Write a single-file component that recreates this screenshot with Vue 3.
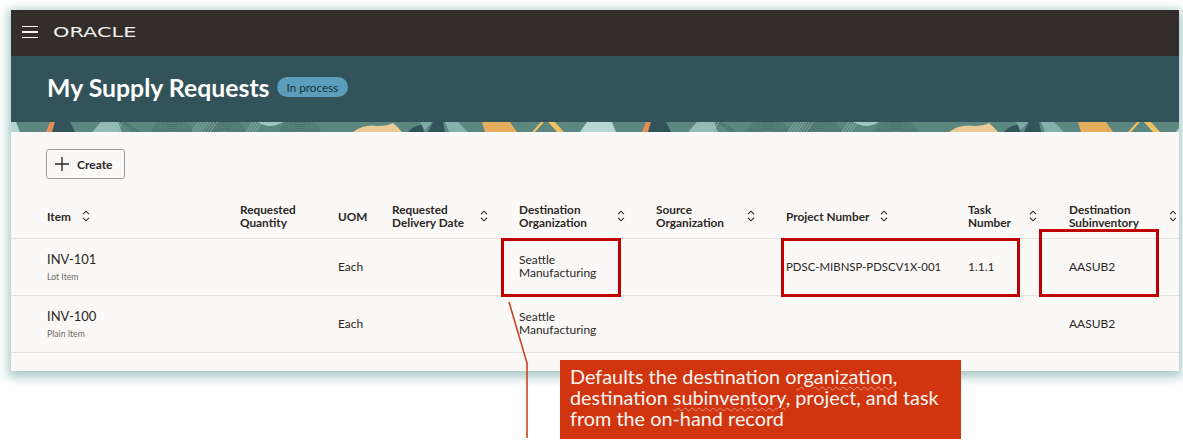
<template>
  <div class="page">
    <div class="panel">
      <header class="topbar">
        <span class="burger"><i></i><i></i><i></i></span>
        <span class="logo">ORACLE</span>
      </header>

      <div class="title-band">
        <h1>My Supply Requests</h1>
        <span class="badge">In process</span>
      </div>

      <!-- banner texture, one tile is 596px wide -->
      <svg class="texture" width="100%" height="10">
        <defs>
          <pattern id="tile" x="-11" y="0" width="596" height="10" patternUnits="userSpaceOnUse">
            <rect width="596" height="10" fill="#5c8781" />
            <polygon points="0,0 16,0 20,10 0,10" fill="#b8d5d6" />
            <polygon points="50,0 55,0 52,10 46,10" fill="#e58f52" />
            <polygon points="55,0 70,0 75,10 52,10" fill="#325359" />
            <polygon points="92,10 101,0 118,0 122,10" fill="#8cb4b0" />
            <path d="M258 0 Q270 8 283 0 Z" fill="#a0c5c2" />
            <g fill="none" stroke="#2f4f50" stroke-width="0.7" opacity="0.75">
              <circle v-for="r in rings" :key="'a' + r" cx="172" cy="18" :r="r" />
              <circle v-for="r in rings" :key="'b' + r" cx="225" cy="18" :r="r" />
              <circle v-for="r in rings" :key="'c' + r" cx="300" cy="18" :r="r" />
              <path d="M120 0Q130 4 135 10M124 0Q132 4 139 10" />
            </g>
            <g stroke="#dfeceb" stroke-width="0.7" opacity="0.45">
              <line v-for="x in hatch" :key="x" :x1="x" y1="10" :x2="x + 7" y2="0" />
            </g>
            <path d="M353 10 Q364 2 378 4 Q388 4 393 1 Q398 5 402 10 Z" fill="#ebcb95" />
            <path d="M408 10 Q414 3 422 3 L424 10 Z" fill="#325359" />
            <polygon points="420,0 432,0 425,8" fill="#7faaa6" />
            <polygon points="428,10 433,0 443,0 445,10" fill="#325359" />
            <polygon points="445,0 458,0 468,10 449,10" fill="#85b0ad" />
            <polygon points="482,0 510,0 517,10 485,10" fill="#e4ae5c" />
            <polygon points="541,0 544,0 535,10 532,10" fill="#edc263" />
            <polygon points="548,0 555,0 564,10 557,10" fill="#edc263" />
            <polygon points="587,0 596,0 596,10 580,10" fill="#b8d5d6" />
          </pattern>
        </defs>
        <rect width="100%" height="10" fill="url(#tile)" />
      </svg>

      <section class="content">
        <button class="create">
          <svg width="14" height="14" viewBox="0 0 14 14">
            <path d="M7 0V14M0 7H14" stroke="#2b2724" stroke-width="1.4" />
          </svg>
          Create
        </button>

        <div class="row head">
          <div v-for="col in columns" :key="col.label" class="th">
            <span class="th-label" :style="{ width: col.width + 'px' }">{{ col.label }}</span>
            <svg v-if="col.sort" class="sort" width="8" height="12" viewBox="0 0 8 12">
              <path d="M1 4.2L4 1.2L7 4.2M1 7.8L4 10.8L7 7.8" fill="none" stroke="#2b2724" stroke-width="1.1" />
            </svg>
          </div>
        </div>

        <div v-for="item in items" :key="item.code" class="row body">
          <div class="td">
            <div class="code">{{ item.code }}</div>
            <div class="kind">{{ item.kind }}</div>
          </div>
          <div class="td"></div>
          <div class="td">Each</div>
          <div class="td"></div>
          <div class="td org">Seattle Manufacturing</div>
          <div class="td"></div>
          <div class="td project">{{ item.project }}</div>
          <div class="td">{{ item.task }}</div>
          <div class="td">AASUB2</div>
        </div>
      </section>
    </div>

    <!-- annotations drawn over the screenshot -->
    <div class="mark mark-org"></div>
    <div class="mark mark-project"></div>
    <div class="mark mark-sub"></div>
    <svg class="leader" width="40" height="145" viewBox="0 0 40 145">
      <path d="M4 1L22 62V137" fill="none" stroke="#d0431c" stroke-width="1.6" />
    </svg>
    <div class="callout">
      Defaults the destination o<span class="typo">rganization</span>,
      destination <span class="typo">subinventory</span>, project, and task
      from the on-hand record
    </div>
  </div>
</template>

<script setup>
const columns = [
  { label: "Item", width: 35, sort: true },
  { label: "Requested Quantity", width: 70 },
  { label: "UOM", width: 40 },
  { label: "Requested Delivery Date", width: 88, sort: true },
  { label: "Destination Organization", width: 98, sort: true },
  { label: "Source Organization", width: 91, sort: true },
  { label: "Project Number", width: 94, sort: true },
  { label: "Task Number", width: 61, sort: true },
  { label: "Destination Subinventory", width: 100, sort: true },
];

const items = [
  { code: "INV-101", kind: "Lot Item", project: "PDSC-MIBNSP-PDSCV1X-001", task: "1.1.1" },
  { code: "INV-100", kind: "Plain Item", project: "", task: "" },
];

// fingerprint circles and hatch lines of the banner
const rings = [10, 12, 14, 16, 18, 20, 22];
const hatch = [95, 98, 101, 104, 107, 110, 113, 116, 192, 195, 198, 201, 204, 207, 210, 246, 249, 252, 255];
</script>

<style>
body {
  background: #fff;
}
</style>

<style scoped>
.page {
  position: relative;
  width: 1183px;
  height: 447px;
  padding: 10px 4px 0 11px;
  box-sizing: border-box;
  overflow: hidden;
  font-family: Lato, "Noto Sans", sans-serif;
  color: #2b2724;
}

.panel {
  height: 361px;
  display: flex;
  flex-direction: column;
  background: #fbf9f8;
  box-shadow: 0 3px 10px 3px #a7c9c6;
}

.topbar {
  height: 46px;
  flex: none;
  display: flex;
  align-items: center;
  gap: 15px;
  padding-left: 11px;
  background: #332e2b;
}

.burger {
  width: 16px;
  margin-top: -2px;
  display: flex;
  flex-direction: column;
  gap: 4px;
}

.burger i {
  height: 1.5px;
  background: #f5f3f1;
}

.logo {
  width: 83px;
  margin-top: -2px;
  font-family: "DejaVu Sans", sans-serif;
  font-size: 14px;
  line-height: 14px;
  color: #f1efed;
  transform: scaleX(1.49);
  transform-origin: left center;
  white-space: nowrap;
}

.title-band {
  height: 66px;
  flex: none;
  display: flex;
  align-items: center;
  gap: 7px;
  padding-left: 36px;
  background: #325359;
}

h1 {
  margin: -4px 0 0;
  font-size: 24.8px;
  font-weight: 700;
  color: #fff;
}

.badge {
  height: 20px;
  padding: 0 10px;
  border-radius: 10px;
  margin-top: -5px;
  background: #5b9dba;
  color: #17303a;
  font-size: 11.7px;
  line-height: 20px;
}

.texture {
  display: block;
  flex: none;
}

.content {
  flex: 1;
  padding-top: 17px;
}

.create {
  display: flex;
  align-items: center;
  gap: 8px;
  width: 79px;
  height: 30px;
  margin: 0 0 18px 35px;
  padding: 0 0 0 8px;
  background: #fbf9f8;
  border: 1px solid #a09c98;
  border-radius: 3px;
  font-family: inherit;
  font-size: 12px;
  font-weight: 700;
  color: #2b2724;
}

.row {
  display: grid;
  grid-template-columns: 193px 98px 54px 127px 137px 130px 182px 101px 1fr;
  padding-left: 36px;
  border-bottom: 1px solid #e4e2df;
  box-sizing: border-box;
}

.head {
  height: 42px;
  padding-bottom: 3px;
  align-items: center;
  font-size: 11.8px;
  font-weight: 700;
  line-height: 13px;
}

.th {
  display: flex;
  align-items: center;
}

.th-label {
  flex: none;
}

.sort {
  flex: none;
}

.body {
  height: 57px;
  padding-bottom: 2px;
  align-items: center;
  font-size: 12px;
  line-height: 13px;
}

.org {
  width: 90px;
}

.project {
  font-size: 11.4px;
}

.code {
  font-size: 13px;
  line-height: 16px;
}

.kind {
  margin-top: 4px;
  font-size: 8.7px;
  line-height: 11px;
  color: #6f6a66;
}

.mark {
  position: absolute;
  box-sizing: border-box;
  border: 3px solid #c00000;
}

.mark-org {
  left: 501px;
  top: 238px;
  width: 120px;
  height: 59px;
}

.mark-project {
  left: 781px;
  top: 238px;
  width: 239px;
  height: 59px;
}

.mark-sub {
  left: 1039px;
  top: 229px;
  width: 120px;
  height: 68px;
}

.leader {
  position: absolute;
  left: 505px;
  top: 301px;
}

.callout {
  position: absolute;
  left: 560px;
  top: 360px;
  width: 401px;
  height: 79px;
  padding: 6px 6px 0 10px;
  box-sizing: border-box;
  background: #d03510;
  color: #fdf5f1;
  font-family: Lato, sans-serif;
  font-size: 19.85px;
  line-height: 21px;
}

.typo {
  text-decoration: underline wavy #e58f7c 0.5px;
  text-underline-offset: 2px;
}
</style>
